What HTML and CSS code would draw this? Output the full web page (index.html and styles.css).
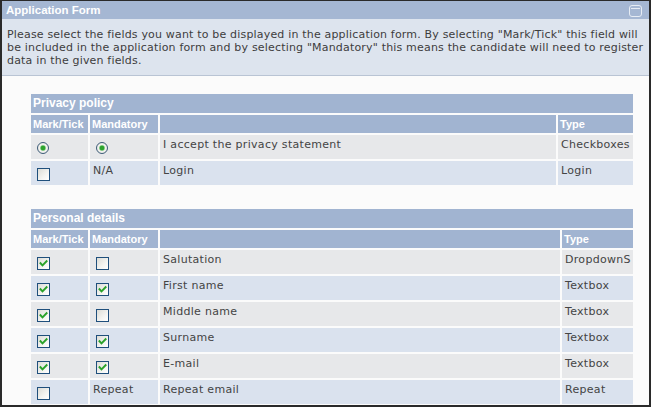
FILE: index.html
```html
<!DOCTYPE html>
<html>
<head>
<meta charset="utf-8">
<title>Application Form</title>
<link rel="stylesheet" href="styles.css">
</head>
<body>
<div class="panel">
  <div class="panel-head">
    <span class="panel-title">Application Form</span>
    <span class="min-btn"></span>
  </div>
  <div class="panel-desc">Please select the fields you want to be displayed in the application form. By selecting "Mark/Tick" this field will be included in the application form and by selecting "Mandatory" this means the candidate will need to register data in the given fields.</div>
  <div class="panel-body">
    <div class="sect sect-privacy">
      <div class="sect-title">Privacy policy</div>
      <div class="hd">Mark/Tick</div><div class="hd">Mandatory</div><div class="hd"></div><div class="hd">Type</div>

      <div class="cell odd"><span class="radio"></span></div>
      <div class="cell odd"><span class="radio"></span></div>
      <div class="cell odd">I accept the privacy statement</div>
      <div class="cell odd">Checkboxes</div>

      <div class="cell even"><span class="cb"></span></div>
      <div class="cell even">N/A</div>
      <div class="cell even">Login</div>
      <div class="cell even">Login</div>
    </div>

    <div class="sect sect-personal">
      <div class="sect-title">Personal details</div>
      <div class="hd">Mark/Tick</div><div class="hd">Mandatory</div><div class="hd"></div><div class="hd">Type</div>

      <div class="cell odd"><span class="cb"><svg class="tick" viewBox="0 0 11 11"><path d="M2.5 5.2 L4.5 7.4 L8.6 3.2"/></svg></span></div>
      <div class="cell odd"><span class="cb"></span></div>
      <div class="cell odd">Salutation</div>
      <div class="cell odd">DropdownS</div>

      <div class="cell even"><span class="cb"><svg class="tick" viewBox="0 0 11 11"><path d="M2.5 5.2 L4.5 7.4 L8.6 3.2"/></svg></span></div>
      <div class="cell even"><span class="cb"><svg class="tick" viewBox="0 0 11 11"><path d="M2.5 5.2 L4.5 7.4 L8.6 3.2"/></svg></span></div>
      <div class="cell even">First name</div>
      <div class="cell even">Textbox</div>

      <div class="cell odd"><span class="cb"><svg class="tick" viewBox="0 0 11 11"><path d="M2.5 5.2 L4.5 7.4 L8.6 3.2"/></svg></span></div>
      <div class="cell odd"><span class="cb"></span></div>
      <div class="cell odd">Middle name</div>
      <div class="cell odd">Textbox</div>

      <div class="cell even"><span class="cb"><svg class="tick" viewBox="0 0 11 11"><path d="M2.5 5.2 L4.5 7.4 L8.6 3.2"/></svg></span></div>
      <div class="cell even"><span class="cb"><svg class="tick" viewBox="0 0 11 11"><path d="M2.5 5.2 L4.5 7.4 L8.6 3.2"/></svg></span></div>
      <div class="cell even">Surname</div>
      <div class="cell even">Textbox</div>

      <div class="cell odd"><span class="cb"><svg class="tick" viewBox="0 0 11 11"><path d="M2.5 5.2 L4.5 7.4 L8.6 3.2"/></svg></span></div>
      <div class="cell odd"><span class="cb"><svg class="tick" viewBox="0 0 11 11"><path d="M2.5 5.2 L4.5 7.4 L8.6 3.2"/></svg></span></div>
      <div class="cell odd">E-mail</div>
      <div class="cell odd">Textbox</div>

      <div class="cell even"><span class="cb"></span></div>
      <div class="cell even">Repeat</div>
      <div class="cell even">Repeat email</div>
      <div class="cell even">Repeat</div>
    </div>
  </div>
</div>
</body>
</html>
```

FILE: styles.css
```css
html, body {
  margin: 0;
  padding: 0;
  background: #ffffff;
}

.panel {
  box-sizing: border-box;
  width: 651px;
  height: 407px;
  border: 2px solid #2a2a2a;
  border-top-width: 1px;
  background: #fbfbfb;
  overflow: hidden;
  display: flex;
  flex-direction: column;
}

.panel-head {
  height: 18px;
  background: #a5b7d3;
  display: flex;
  align-items: center;
  justify-content: space-between;
  padding: 0 7px 0 4px;
  flex: none;
}

.panel-title {
  font-family: "Liberation Sans", Arial, sans-serif;
  font-weight: bold;
  font-size: 11.5px;
  color: #ffffff;
  line-height: 18px;
}

.min-btn {
  box-sizing: border-box;
  width: 13px;
  height: 12px;
  border: 1px solid #e6ecf4;
  border-radius: 3px;
  position: relative;
  margin-top: 1px;
}

.min-btn::after {
  content: "";
  position: absolute;
  left: 1px;
  right: 1px;
  top: 2px;
  height: 1px;
  background: #e6ecf4;
}

.panel-desc {
  flex: none;
  background: #dde4ee;
  border-bottom: 1px solid #b9c4d4;
  padding: 9px 3px 8px 5px;
  font-family: "DejaVu Sans", Verdana, sans-serif;
  font-size: 11px;
  line-height: 13px;
  letter-spacing: 0.18px;
  color: #3d3d3d;
}

.panel-body {
  flex: 1;
  padding: 18px 16px 0 29px;
  overflow: hidden;
}

.sect {
  display: grid;
  column-gap: 2px;
  row-gap: 2px;
  grid-template-rows: 19px 18px;
  grid-auto-rows: 24px;
  margin-bottom: 24px;
}

.sect-privacy {
  grid-template-columns: 57px 68px 1fr 75px;
}

.sect-personal {
  grid-template-columns: 57px 68px 1fr 71px;
}

.sect-title {
  grid-column: 1 / -1;
  background: #a1b4d1;
  color: #ffffff;
  font-family: "Liberation Sans", Arial, sans-serif;
  font-weight: bold;
  font-size: 12px;
  line-height: 19px;
  padding-left: 2px;
}

.hd {
  background: #a1b4d1;
  color: #ffffff;
  font-family: "Liberation Sans", Arial, sans-serif;
  font-weight: bold;
  font-size: 11px;
  line-height: 18px;
  padding-left: 2px;
  white-space: nowrap;
  overflow: hidden;
}

.cell {
  font-family: "DejaVu Sans", Verdana, sans-serif;
  font-size: 11px;
  line-height: 13px;
  letter-spacing: 0.3px;
  color: #444444;
  padding: 3px 0 0 3px;
  white-space: nowrap;
  overflow: hidden;
}

.odd {
  background: #e7e8ea;
}

.even {
  background: #dae2ee;
}

.cb {
  display: block;
  box-sizing: border-box;
  width: 13px;
  height: 13px;
  margin: 4px 0 0 3px;
  border: 1px solid #1f4f7c;
  background: linear-gradient(135deg, #dcdcd6 0%, #f4f4f1 60%, #ffffff 100%);
}

.tick {
  display: block;
  width: 11px;
  height: 11px;
}

.tick path {
  fill: none;
  stroke: #2aa22a;
  stroke-width: 1.9;
  stroke-linecap: square;
}

.radio {
  display: block;
  box-sizing: border-box;
  width: 12px;
  height: 12px;
  margin: 4px 0 0 3px;
  border: 1px solid #3d5b78;
  border-radius: 50%;
  background: radial-gradient(circle at 50% 50%, #2ea32e 0, #2ea32e 2px, #8fd08f 2.6px, #f3f3f0 3.4px, #e0e0da 100%);
}
```
